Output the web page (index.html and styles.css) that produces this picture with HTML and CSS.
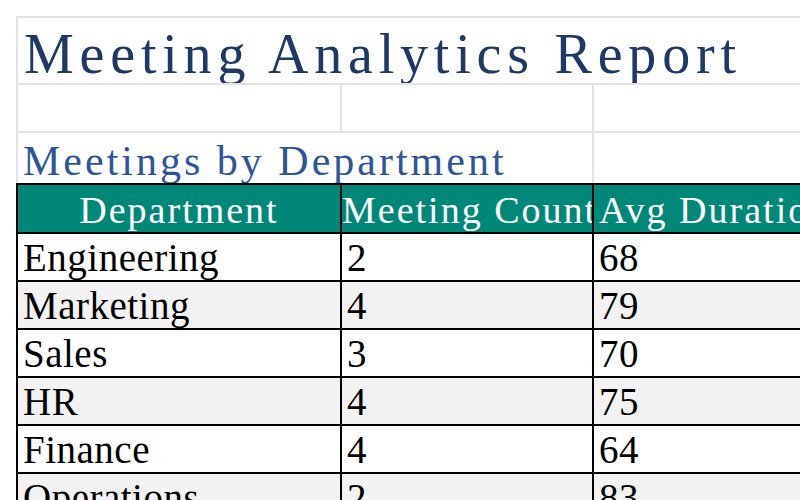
FILE: index.html
```html
<!DOCTYPE html>
<html>
<head>
<meta charset="utf-8">
<link rel="stylesheet" href="styles.css">
</head>
<body>
<div class="sheet">
  <div class="grid-row title-row">
    <div class="cell title">Meeting Analytics Report</div>
  </div>
  <div class="grid-row blank-row">
    <div class="cell"></div><div class="cell"></div><div class="cell"></div>
  </div>
  <div class="grid-row sub-row">
    <div class="cell subtitle">Meetings by Department</div><div class="cell"></div>
  </div>
  <div class="tbl">
    <div class="grid-row head">
      <div class="cell hc">Department</div>
      <div class="cell hc">Meeting Count</div>
      <div class="cell hc hc-left">Avg Duration (min)</div>
    </div>
    <div class="grid-row data"><div class="cell">Engineering</div><div class="cell">2</div><div class="cell">68</div></div>
    <div class="grid-row data alt"><div class="cell">Marketing</div><div class="cell">4</div><div class="cell">79</div></div>
    <div class="grid-row data"><div class="cell">Sales</div><div class="cell">3</div><div class="cell">70</div></div>
    <div class="grid-row data alt"><div class="cell">HR</div><div class="cell">4</div><div class="cell">75</div></div>
    <div class="grid-row data"><div class="cell">Finance</div><div class="cell">4</div><div class="cell">64</div></div>
    <div class="grid-row data alt"><div class="cell">Operations</div><div class="cell">2</div><div class="cell">83</div></div>
  </div>
</div>
</body>
</html>
```
FILE: styles.css
```css
html, body {
  margin: 0;
  padding: 0;
  background: #ffffff;
  overflow: hidden;
}

.sheet {
  padding: 16px 0 0 16px;
  width: 900px;
  font-family: "Liberation Serif", serif;
  line-height: 1;
}

.grid-row {
  display: grid;
  grid-template-columns: 326px 252px 1fr;
}

.cell {
  box-sizing: border-box;
  border-right: 2px solid #e2e2e2;
  border-bottom: 2px solid #e2e2e2;
  overflow: hidden;
  white-space: nowrap;
}

.cell:first-child {
  border-left: 2px solid #e2e2e2;
}

.title-row .cell {
  grid-column: 1 / -1;
  border-top: 2px solid #e2e2e2;
  height: 69px;
}

.title {
  font-size: 56px;
  letter-spacing: 5.8px;
  color: #1f3864;
  padding: 8px 0 0 6px;
}

.blank-row .cell {
  height: 48px;
}

.sub-row .cell {
  height: 50px;
  border-bottom: none;
}

.subtitle {
  grid-column: 1 / 3;
  font-size: 42px;
  letter-spacing: 3px;
  color: #2f5597;
  padding: 7px 0 0 5px;
}

.tbl {
  border-top: 2px solid #000;
}

.tbl .cell {
  border-color: #000;
}

.head .cell {
  height: 49px;
  background: #018777;
  color: #ffffff;
  font-size: 38px;
  letter-spacing: 2px;
  text-align: center;
  padding-top: 6px;
}

.head .hc-left {
  text-align: left;
  padding-left: 5px;
}

.data .cell {
  height: 48px;
  font-size: 39px;
  letter-spacing: 0.5px;
  color: #000;
  padding: 4px 0 0 5px;
}

.data.alt .cell {
  background: #f2f2f2;
}
```
